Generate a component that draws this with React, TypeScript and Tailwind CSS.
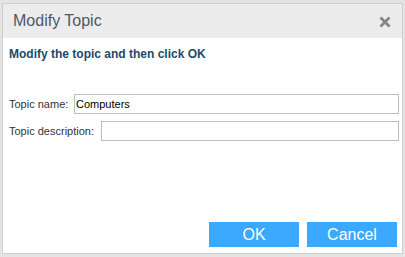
export default function App() {
  return (
    <div className="w-[405px] h-[257px] bg-[#e4e4e4] pl-[2px] pt-[3px] overflow-hidden" style={{ fontFamily: '"Liberation Sans", Arial, sans-serif' }}>
      <div className="w-[401px] h-[251px] border border-[#cfcfcf] bg-white flex flex-col">
        {/* Header */}
        <div className="h-[34px] bg-[#ececec] flex items-center justify-between pl-[10px] pr-[11px]">
          <span className="text-[16px] text-[#4d5966]">Modify Topic</span>
          <svg width="12" height="12" viewBox="0 0 12 12" className="mt-[1px]">
            <path d="M1.5 1.5 L10.5 10.5 M10.5 1.5 L1.5 10.5" stroke="#858585" strokeWidth="2.8" strokeLinecap="butt" />
          </svg>
        </div>

        {/* Body */}
        <div className="flex-1 flex flex-col pl-[6px] pr-[3px]">
          <div className="mt-[9px] text-[12px] leading-[14px] font-bold text-[#1d4a6b]">
            Modify the topic and then click OK
          </div>

          <div className="mt-[33px] flex items-center">
            <label className="text-[11px] text-[#333] w-[65px]">Topic name:</label>
            <input
              type="text"
              defaultValue="Computers"
              className="w-[325px] h-[20px] border border-[#bdbdbd] px-[1px] text-[11px] text-black outline-none"
            />
          </div>

          <div className="mt-[7px] flex items-center">
            <label className="text-[11px] text-[#333] w-[92px]">Topic description:</label>
            <input
              type="text"
              className="w-[298px] h-[20px] border border-[#bdbdbd] px-[1px] text-[11px] outline-none"
            />
          </div>

          <div className="flex-1" />

          <div className="flex justify-end gap-[8px] pr-[2px] mb-[6px]">
            <button className="w-[90px] h-[25px] bg-[#3aa9ff] text-white text-[16px]">OK</button>
            <button className="w-[90px] h-[25px] bg-[#3aa9ff] text-white text-[16px]">Cancel</button>
          </div>
        </div>
      </div>
    </div>
  )
}
